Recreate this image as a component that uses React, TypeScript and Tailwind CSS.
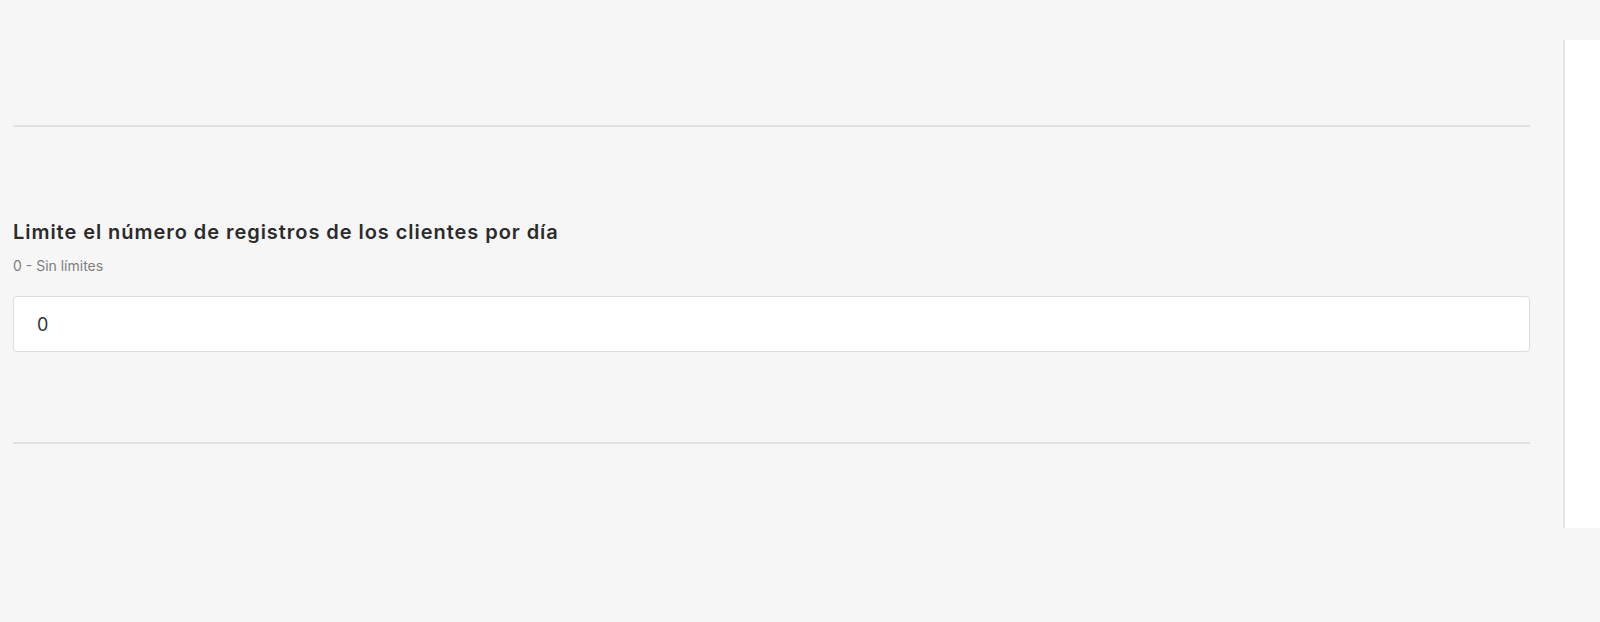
export default function App() {
  return (
    <div
      className="flex h-[622px] w-full bg-[#f6f6f6]"
      style={{ fontFamily: "Inter, 'Noto Sans', sans-serif" }}
    >
      <div className="flex w-[1530px] flex-col pl-[13px] pt-[125px]">
        <div className="h-[2px] w-full bg-[#e0e1e3]" />
        <div className="pt-[93px]">
          <h2 className="text-[20px] font-semibold leading-[24px] tracking-[0.95px] text-[#2b2b2b]">
            Limite el número de registros de los clientes por día
          </h2>
          <p className="mt-[12px] text-[14px] leading-[20px] text-[#808080]">0 - Sin límites</p>
          <input
            readOnly
            value="0"
            className="mt-[20px] h-[56px] w-full rounded-[4px] border border-[#dedede] bg-white px-[23px] text-[18px] text-[#333] outline-none"
          />
        </div>
        <div className="mt-[90px] h-[2px] w-full bg-[#e0e1e3]" />
      </div>
      <div className="ml-auto mt-[40px] h-[488px] w-[37px] border-l-2 border-[#e4e4e4] bg-white" />
    </div>
  );
}
